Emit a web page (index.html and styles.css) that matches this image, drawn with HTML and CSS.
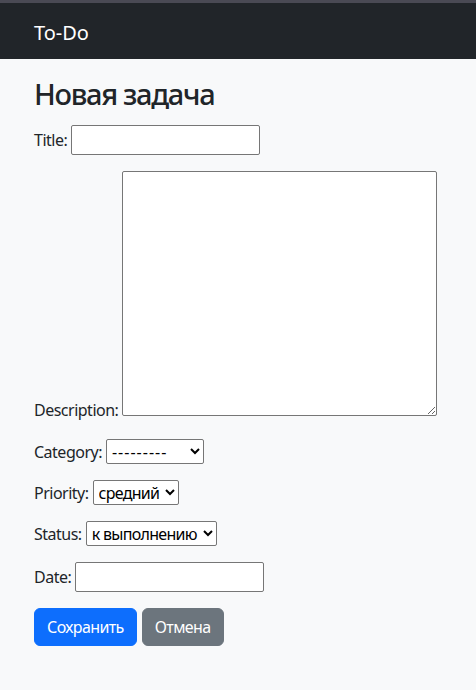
FILE: index.html
```html
<!DOCTYPE html>
<html lang="ru">
<head>
<meta charset="utf-8">
<title>To-Do</title>
<link rel="stylesheet" href="styles.css">
</head>
<body>
<div class="topstrip"></div>
<nav class="navbar">
  <a class="brand" href="#">To-Do</a>
</nav>
<main class="container">
  <h1 class="title">Новая задача</h1>
  <form class="task-form">
    <p class="row row-text"><label for="t">Title:</label> <input id="t" class="ctl text" type="text"></p>
    <p class="row row-desc"><label for="d">Description:</label> <textarea id="d" class="ctl area"></textarea></p>
    <p class="row"><label for="c">Category:</label> <select id="c" class="ctl sel sel-cat"><option>---------</option></select></p>
    <p class="row"><label for="p">Priority:</label> <select id="p" class="ctl sel sel-pri"><option>средний</option></select></p>
    <p class="row"><label for="s">Status:</label> <select id="s" class="ctl sel sel-st"><option>к выполнению</option></select></p>
    <p class="row row-text"><label for="dt">Date:</label> <input id="dt" class="ctl text" type="text"></p>
    <div class="actions">
      <button type="submit" class="btn btn-primary">Сохранить</button>
      <button type="button" class="btn btn-secondary">Отмена</button>
    </div>
  </form>
</main>
</body>
</html>
```
FILE: styles.css
```css
html, body {
  margin: 0;
  padding: 0;
}
body {
  background: #f8f9fa;
  color: #212529;
  font-family: "Noto Sans", "Open Sans", sans-serif;
  font-size: 16px;
  line-height: 1.5;
}
.topstrip {
  height: 3px;
  background: #4a4a54;
}
.navbar {
  background: #212529;
  padding: 8px 34px;
  height: 56px;
  box-sizing: border-box;
}
.brand {
  display: inline-block;
  color: #fff;
  text-decoration: none;
  font-size: 20px;
  line-height: 30px;
  padding: 7px 0 3px;
}
.container {
  padding: 18px 34px 0;
}
.title {
  font-size: 29px;
  font-weight: 500;
  line-height: 1.2;
  letter-spacing: -1.3px;
  margin: 0 0 13px;
}
.task-form {
  margin: 0;
  letter-spacing: -0.5px;
}
.row {
  margin: 0 0 16px;
  display: flex;
  align-items: flex-end;
  gap: 4px;
}
.row label {
  line-height: 24px;
}
.row-text label {
  margin-bottom: 3px;
}
.row-desc {
  padding-bottom: 7px;
}
.row-desc label {
  margin-bottom: -6px;
}
.ctl {
  font: inherit;
  letter-spacing: 0;
  color: #000;
  background: #fff;
  border: 1px solid #767676;
  border-radius: 2px;
  box-sizing: border-box;
  margin: 0;
}
.text {
  width: 189px;
  height: 30px;
  padding: 1px 2px;
}
.area {
  width: 315px;
  height: 245px;
  padding: 2px;
}
.sel {
  height: 25px;
  padding: 0 1px;
  font-size: 16px;
  line-height: 20px;
  letter-spacing: -0.7px;
}
.sel-cat { width: 98px; letter-spacing: 1px; }
.sel-pri { width: 86px; }
.sel-st { width: 131px; }
.actions {
  display: flex;
  gap: 5px;
}
.btn {
  font: inherit;
  letter-spacing: -0.6px;
  border: 1px solid transparent;
  border-radius: 6px;
  padding: 6px 12px;
  line-height: 24px;
  color: #fff;
  cursor: pointer;
}
.btn-primary {
  background: #0d6efd;
  border-color: #0d6efd;
}
.btn-secondary {
  background: #6c757d;
  border-color: #6c757d;
}
```
